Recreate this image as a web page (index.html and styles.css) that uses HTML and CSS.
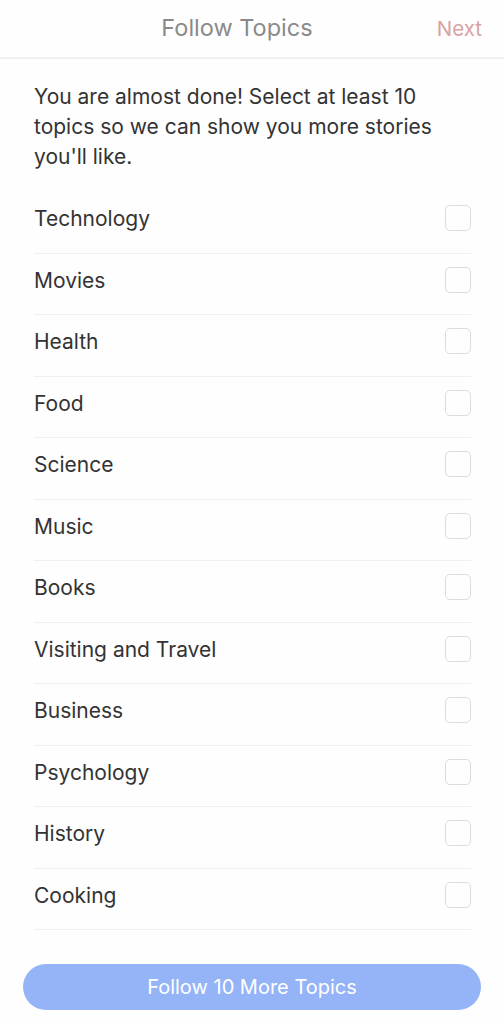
FILE: index.html
```html
<!DOCTYPE html>
<html>
<head>
<meta charset="utf-8">
<link rel="stylesheet" href="styles.css">
</head>
<body>
<div class="screen">
  <header class="topbar">
    <div class="title">Follow Topics</div>
    <div class="next">Next</div>
  </header>
  <p class="intro">You are almost done! Select at least 10 topics so we can show you more stories you'll like.</p>
  <ul class="topics">
    <li class="topic"><span>Technology</span><span class="box"></span></li>
    <li class="topic"><span>Movies</span><span class="box"></span></li>
    <li class="topic"><span>Health</span><span class="box"></span></li>
    <li class="topic"><span>Food</span><span class="box"></span></li>
    <li class="topic"><span>Science</span><span class="box"></span></li>
    <li class="topic"><span>Music</span><span class="box"></span></li>
    <li class="topic"><span>Books</span><span class="box"></span></li>
    <li class="topic"><span>Visiting and Travel</span><span class="box"></span></li>
    <li class="topic"><span>Business</span><span class="box"></span></li>
    <li class="topic"><span>Psychology</span><span class="box"></span></li>
    <li class="topic"><span>History</span><span class="box"></span></li>
    <li class="topic"><span>Cooking</span><span class="box"></span></li>
  </ul>
  <div class="footer">
    <button class="follow">Follow 10 More Topics</button>
  </div>
</div>
</body>
</html>
```

FILE: styles.css
```css
* { box-sizing: border-box; }
html, body {
  margin: 0;
  padding: 0;
  background: #fefefe;
  font-family: Inter, "Noto Sans", sans-serif;
  color: #333;
}
.screen {
  width: 504px;
  height: 1024px;
  display: flex;
  flex-direction: column;
}
.topbar {
  position: relative;
  height: 59px;
  border-bottom: 2px solid #f0f0f0;
  display: flex;
  align-items: center;
  justify-content: center;
}
.title {
  font-size: 23.5px;
  color: #8a8a8a;
  margin-top: -2px;
  margin-left: -30px;
}
.next {
  position: absolute;
  right: 22px;
  top: 16px;
  font-size: 20.5px;
  color: #d8a3a3;
}
.intro {
  margin: 0;
  padding: 23px 34px 0 34px;
  font-size: 21px;
  line-height: 30px;
  color: #333;
}
.topics {
  list-style: none;
  margin: 20px 33px 0 34px;
  padding: 0;
}
.topic {
  height: 61.5px;
  padding: 14px 0 0 0;
  border-bottom: 1.5px solid #f0f0f0;
  display: flex;
  justify-content: space-between;
  align-items: flex-start;
  font-size: 21px;
  line-height: 26px;
}
.box {
  width: 26px;
  height: 26px;
  border: 1.5px solid #dcdcdc;
  border-radius: 5px;
  margin-top: -1px;
}
.footer {
  padding: 34px 23px 0 23px;
}
.follow {
  width: 458px;
  height: 46px;
  border: none;
  border-radius: 23px;
  background: #94b4f7;
  color: #fff;
  font-family: Inter, "Noto Sans", sans-serif;
  font-size: 20px;
  padding: 0;
}
```
